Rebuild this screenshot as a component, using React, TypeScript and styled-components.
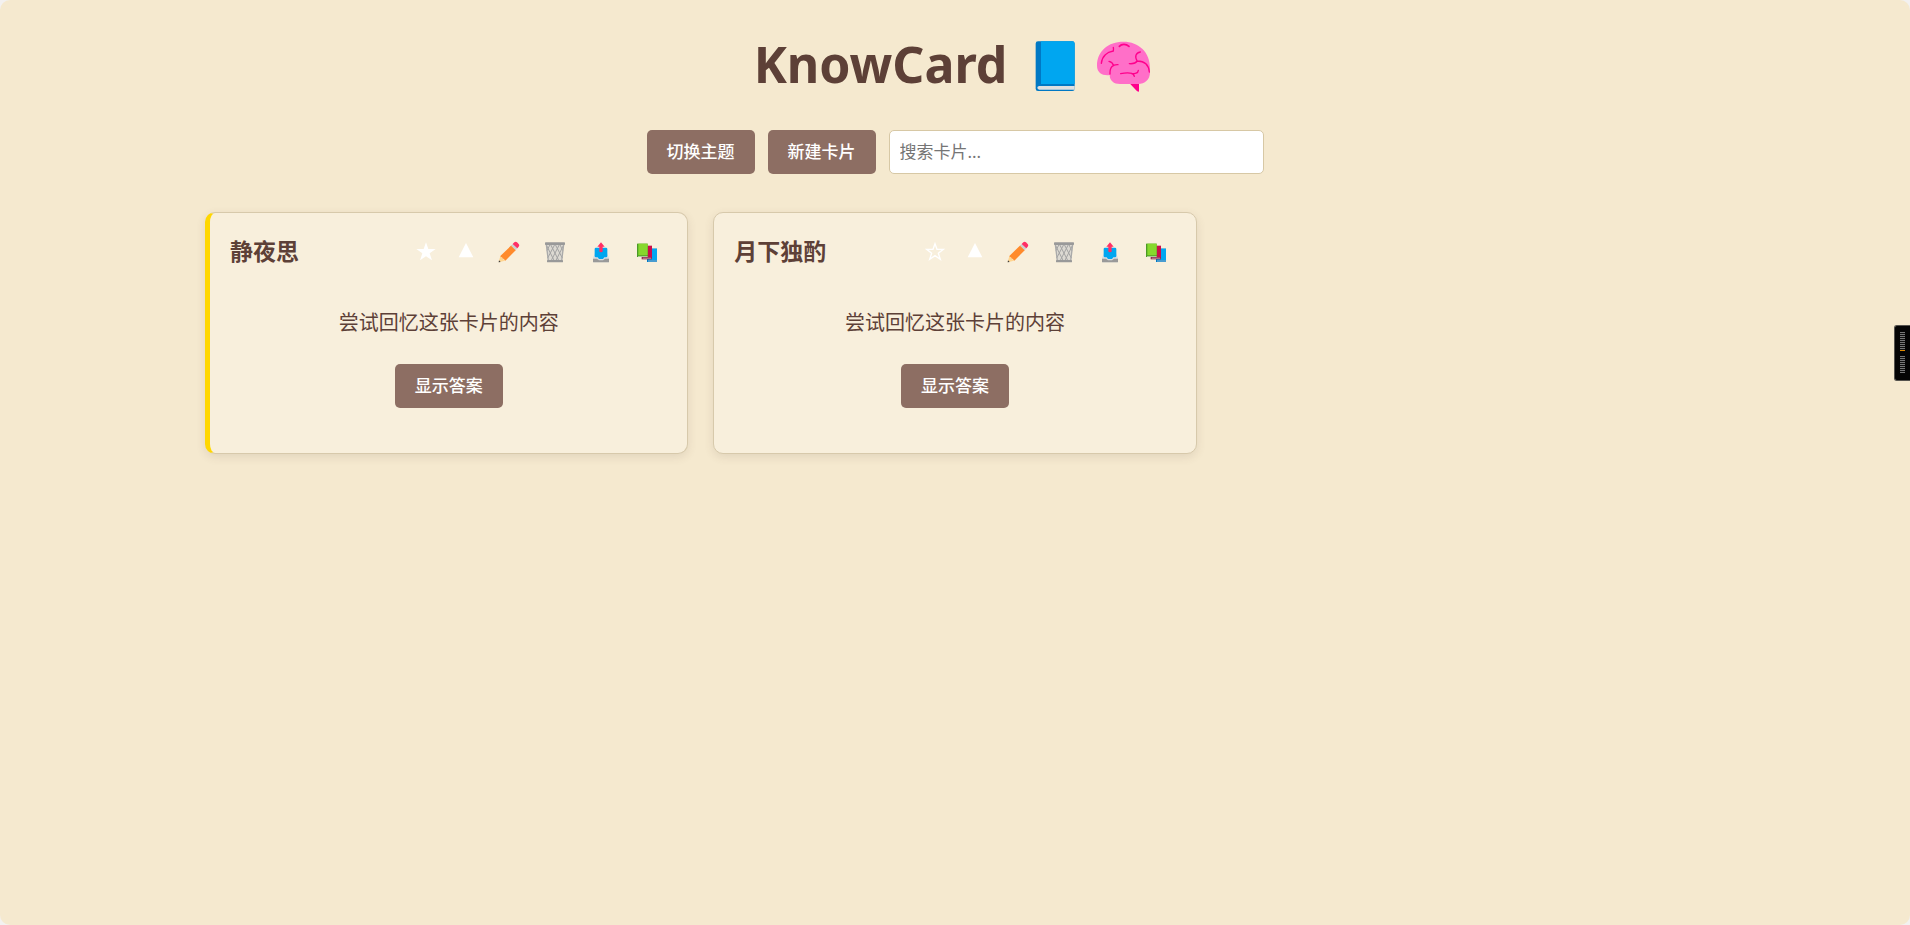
import React, { useState } from "react";
import styled, { createGlobalStyle } from "styled-components";

const GlobalStyle = createGlobalStyle`
  *, *::before, *::after { box-sizing: border-box; }
  html { background: #f3f1f0; }
  body {
    margin: 0;
    font-family: "Noto Sans", "Noto Sans CJK SC", sans-serif;
    color: #5d4037;
  }
`;

const Page = styled.div`
  min-height: 100vh;
  padding: 30px 20px;
  background: #f5e9cf;
  border-radius: 10px;
`;

const Title = styled.h1`
  display: flex;
  justify-content: center;
  margin: 0 0 32px;
  font-size: 50px;
  line-height: 68px;
  font-weight: 700;
`;

const TitleText = styled.span`
  margin-right: 13px;
`;

const TitleArt = styled.svg`
  width: 68px;
  height: 68px;
  flex: none;
`;

const Toolbar = styled.div`
  display: flex;
  justify-content: center;
  gap: 13px;
  margin-bottom: 38px;
`;

const Button = styled.button`
  height: 44px;
  padding: 0 20px;
  border: 0;
  border-radius: 5px;
  background: #8d6e63;
  color: #fff;
  font-family: inherit;
  font-size: 17px;
  font-weight: 500;
  line-height: 24px;
  cursor: pointer;
`;

const Search = styled.input`
  width: 375px;
  height: 44px;
  padding: 0 10px 2px;
  border: 1px solid #d7c8a5;
  border-radius: 5px;
  background: #fff;
  color: #5d4037;
  font-family: inherit;
  font-size: 17px;
  &::placeholder { color: #757575; }
`;

const Grid = styled.main`
  display: grid;
  grid-template-columns: repeat(auto-fill, minmax(375px, 1fr));
  gap: 25px;
  max-width: 1500px;
  margin: 0 auto;
`;

const CardBox = styled.article<{ $starred: boolean }>`
  padding: 20px;
  border: 1px solid #d7c9ab;
  ${(p) => p.$starred && "border-left: 5px solid #ffd700;"}
  border-radius: 10px;
  background: #f8efdc;
  box-shadow: 0 3px 10px rgba(93, 64, 55, 0.12);
`;

const CardHeader = styled.header`
  display: flex;
  align-items: flex-start;
  justify-content: space-between;
  height: 38px;
  margin-bottom: 12px;
`;

const CardTitle = styled.h2`
  margin: 0;
  font-size: 23px;
  line-height: 36px;
  font-weight: 700;
`;

const Actions = styled.div`
  display: flex;
  gap: 6px;
`;

const IconButton = styled.button<{ $narrow?: boolean }>`
  display: flex;
  align-items: center;
  justify-content: center;
  width: ${(p) => (p.$narrow ? 34 : 40)}px;
  height: 38px;
  padding: 0;
  border: 0;
  background: none;
  color: #fff;
  cursor: pointer;
  svg { width: 22px; height: 22px; flex: none; }
`;

const Recall = styled.div`
  display: flex;
  flex-direction: column;
  align-items: center;
  padding: 25px 0;
`;

const Hint = styled.p`
  margin: 0 0 26px;
  font-size: 20px;
  line-height: 30px;
`;

const SideHandle = styled.button`
  position: fixed;
  top: 325px;
  right: 0;
  display: flex;
  flex-direction: column;
  align-items: center;
  gap: 5px;
  width: 16px;
  height: 56px;
  padding: 6px 0;
  border: 1px solid #55534e;
  border-right: 0;
  border-radius: 3px 0 0 3px;
  background: #050505;
`;

const Ticks = styled.span<{ $count: number }>`
  width: 5px;
  height: ${(p) => p.$count * 2 - 1}px;
  background: repeating-linear-gradient(#777 0 1px, #111 1px 2px);
`;

const OrangeTicks = styled(Ticks)`
  border-bottom: 1px solid #e08a00;
`;

const BlueBook = () => (
  <TitleArt viewBox="0 0 204 204" role="img" aria-label="book">
    <rect x="47" y="34" width="117" height="149" rx="7" fill="#0078c4" />
    <path d="M63 34h94q7 0 7 7v121H63z" fill="#00a6f0" />
    <path d="M58 168h106v11H58q-6 0-6-5.500t6-5.500z" fill="#e0e0e0" />
  </TitleArt>
);

const Brain = () => (
  <TitleArt viewBox="0 0 204 204" role="img" aria-label="brain">
    <path d="M126 161h27v24q-6 0-10-6z" fill="#ff008c" />
    <path
      d="M27 107C27 63 61 35 106 35c47 0 80 32 80 79v13c0 22-15 35-36 35H96c-19 0-31-10-31-27-20 3-38-6-38-28z"
      fill="#ff6fc8"
    />
    <g fill="none" stroke="#ff008c" strokeWidth="4" strokeLinecap="round">
      <path d="M40 100c2-20 16-34 36-37M76 63q1-5 0-11" />
      <path d="M94 49c7-8 20-8 29 0" strokeWidth="5" />
      <path d="M63 94c9 2 12 7 14 13M90 104c-15-1-25 6-24 28" />
      <path d="M157 66c-14 3-18 14-9 28M124 101c10 1 19-1 24-8 20 0 34 11 36 33" />
      <path d="M98 131c13-3 22-4 34-1 9 2 18 0 19-9M129 130q8 1 10 9" />
    </g>
  </TitleArt>
);

const StarIcon = ({ filled }: { filled: boolean }) => (
  <svg viewBox="0 0 66 66" aria-hidden="true">
    {filled ? (
      <path d="M33 4l7 20h22L44 37l7 21-18-12-18 12 7-21L4 24h22z" fill="currentColor" />
    ) : (
      <path
        d="M33 8l6 17h19L43 37l6 18-16-11-16 11 6-18L8 25h19z"
        fill="none"
        stroke="currentColor"
        strokeWidth="4"
      />
    )}
  </svg>
);

const TriangleIcon = () => (
  <svg viewBox="0 0 66 66" aria-hidden="true">
    <path d="M33 6l22 43H11z" fill="currentColor" />
  </svg>
);

const PencilIcon = () => (
  <svg viewBox="0 0 66 66" aria-hidden="true">
    <path d="M7 45l14 14L2 64z" fill="#ffd590" />
    <path d="M3 58l5 5-6 1z" fill="#3b3b3b" />
    <path d="M40 13l14 14-32 32q-3-1-4-5-5 0-6-5-4 0-5-4z" fill="#ff8a2c" />
    <path d="M45 8l14 13-6 7-14-14z" fill="#cfcfcf" />
    <path d="M49 4q4-4 8 0l5 5q4 4 0 8l-4 5L44 9z" fill="#ff2f66" />
  </svg>
);

const TrashIcon = () => (
  <svg viewBox="0 0 66 66" aria-hidden="true">
    <path d="M6 10h54l-6 50H12z" fill="#dcd9d2" />
    <path
      d="M8 14l22 44M20 11l24 47M34 11l21 40M48 11l8 18M58 14L36 58M46 11L22 58M32 11L11 51M18 11L9 28"
      stroke="#a3a3a3"
      strokeWidth="3"
      fill="none"
    />
    <path d="M7 10l6 50M59 10l-6 50" stroke="#aaa" strokeWidth="4" />
    <rect x="3" y="4" width="60" height="8" rx="2" fill="#999" />
    <rect x="9" y="57" width="48" height="7" rx="2" fill="#999" />
  </svg>
);

const OutboxIcon = () => (
  <svg viewBox="0 0 66 66" aria-hidden="true">
    <path d="M15 36h36l6 15v13H9V51z" fill="#d9dde0" />
    <path d="M9 53h12l6 5h12l6-5h12v9q0 2-2 2H11q-2 0-2-2z" fill="#999" />
    <path d="M18 20h30q4 0 4 4v21q0 4-4 4h-5l-4 5H27l-4-5h-5q-4 0-4-4V24q0-4 4-4z" fill="#00a6f0" />
    <path d="M33 4l11 13h-6v14q0 3-5 3t-5-3V17h-6z" fill="#ff2f66" />
  </svg>
);

const BooksIcon = () => (
  <svg viewBox="0 0 66 66" aria-hidden="true">
    <rect x="33" y="23" width="30" height="40" fill="#0078c4" />
    <rect x="37" y="23" width="26" height="34" fill="#00a6f0" />
    <path d="M36 59h27v2H36z" fill="#d8e4ea" />
    <rect x="17" y="15" width="31" height="40" fill="#8f1846" />
    <path d="M34 14h14v34H34z" fill="#c90e4b" />
    <path d="M20 50h26v3H20z" fill="#b9a0a6" />
    <rect x="3" y="8" width="32" height="40" fill="#4b9a26" />
    <rect x="7" y="8" width="28" height="35" fill="#86d82d" />
    <path d="M6 45h29v2H6z" fill="#dce8d2" />
  </svg>
);

interface CardProps {
  title: string;
  starred: boolean;
}

const Card = ({ title, starred }: CardProps) => (
  <CardBox $starred={starred}>
    <CardHeader>
      <CardTitle>{title}</CardTitle>
      <Actions>
        <IconButton $narrow aria-label="收藏"><StarIcon filled={starred} /></IconButton>
        <IconButton $narrow aria-label="置顶"><TriangleIcon /></IconButton>
        <IconButton aria-label="编辑"><PencilIcon /></IconButton>
        <IconButton aria-label="删除"><TrashIcon /></IconButton>
        <IconButton aria-label="导出"><OutboxIcon /></IconButton>
        <IconButton aria-label="复习"><BooksIcon /></IconButton>
      </Actions>
    </CardHeader>
    <Recall>
      <Hint>尝试回忆这张卡片的内容</Hint>
      <Button>显示答案</Button>
    </Recall>
  </CardBox>
);

const cards: CardProps[] = [
  { title: "静夜思", starred: true },
  { title: "月下独酌", starred: false },
];

export default function App() {
  const [query, setQuery] = useState("");
  return (
    <>
      <GlobalStyle />
      <Page lang="zh-CN">
        <Title>
          <TitleText>KnowCard</TitleText>
          <BlueBook />
          <Brain />
        </Title>
        <Toolbar>
          <Button>切换主题</Button>
          <Button>新建卡片</Button>
          <Search
            type="text"
            aria-label="搜索卡片"
            placeholder="搜索卡片..."
            value={query}
            onChange={(e) => setQuery(e.target.value)}
          />
        </Toolbar>
        <Grid>
          {cards
            .filter((c) => c.title.includes(query))
            .map((c) => (
              <Card key={c.title} {...c} />
            ))}
        </Grid>
        <SideHandle aria-label="侧边栏">
          <OrangeTicks $count={10} />
          <Ticks $count={9} />
        </SideHandle>
      </Page>
    </>
  );
}
